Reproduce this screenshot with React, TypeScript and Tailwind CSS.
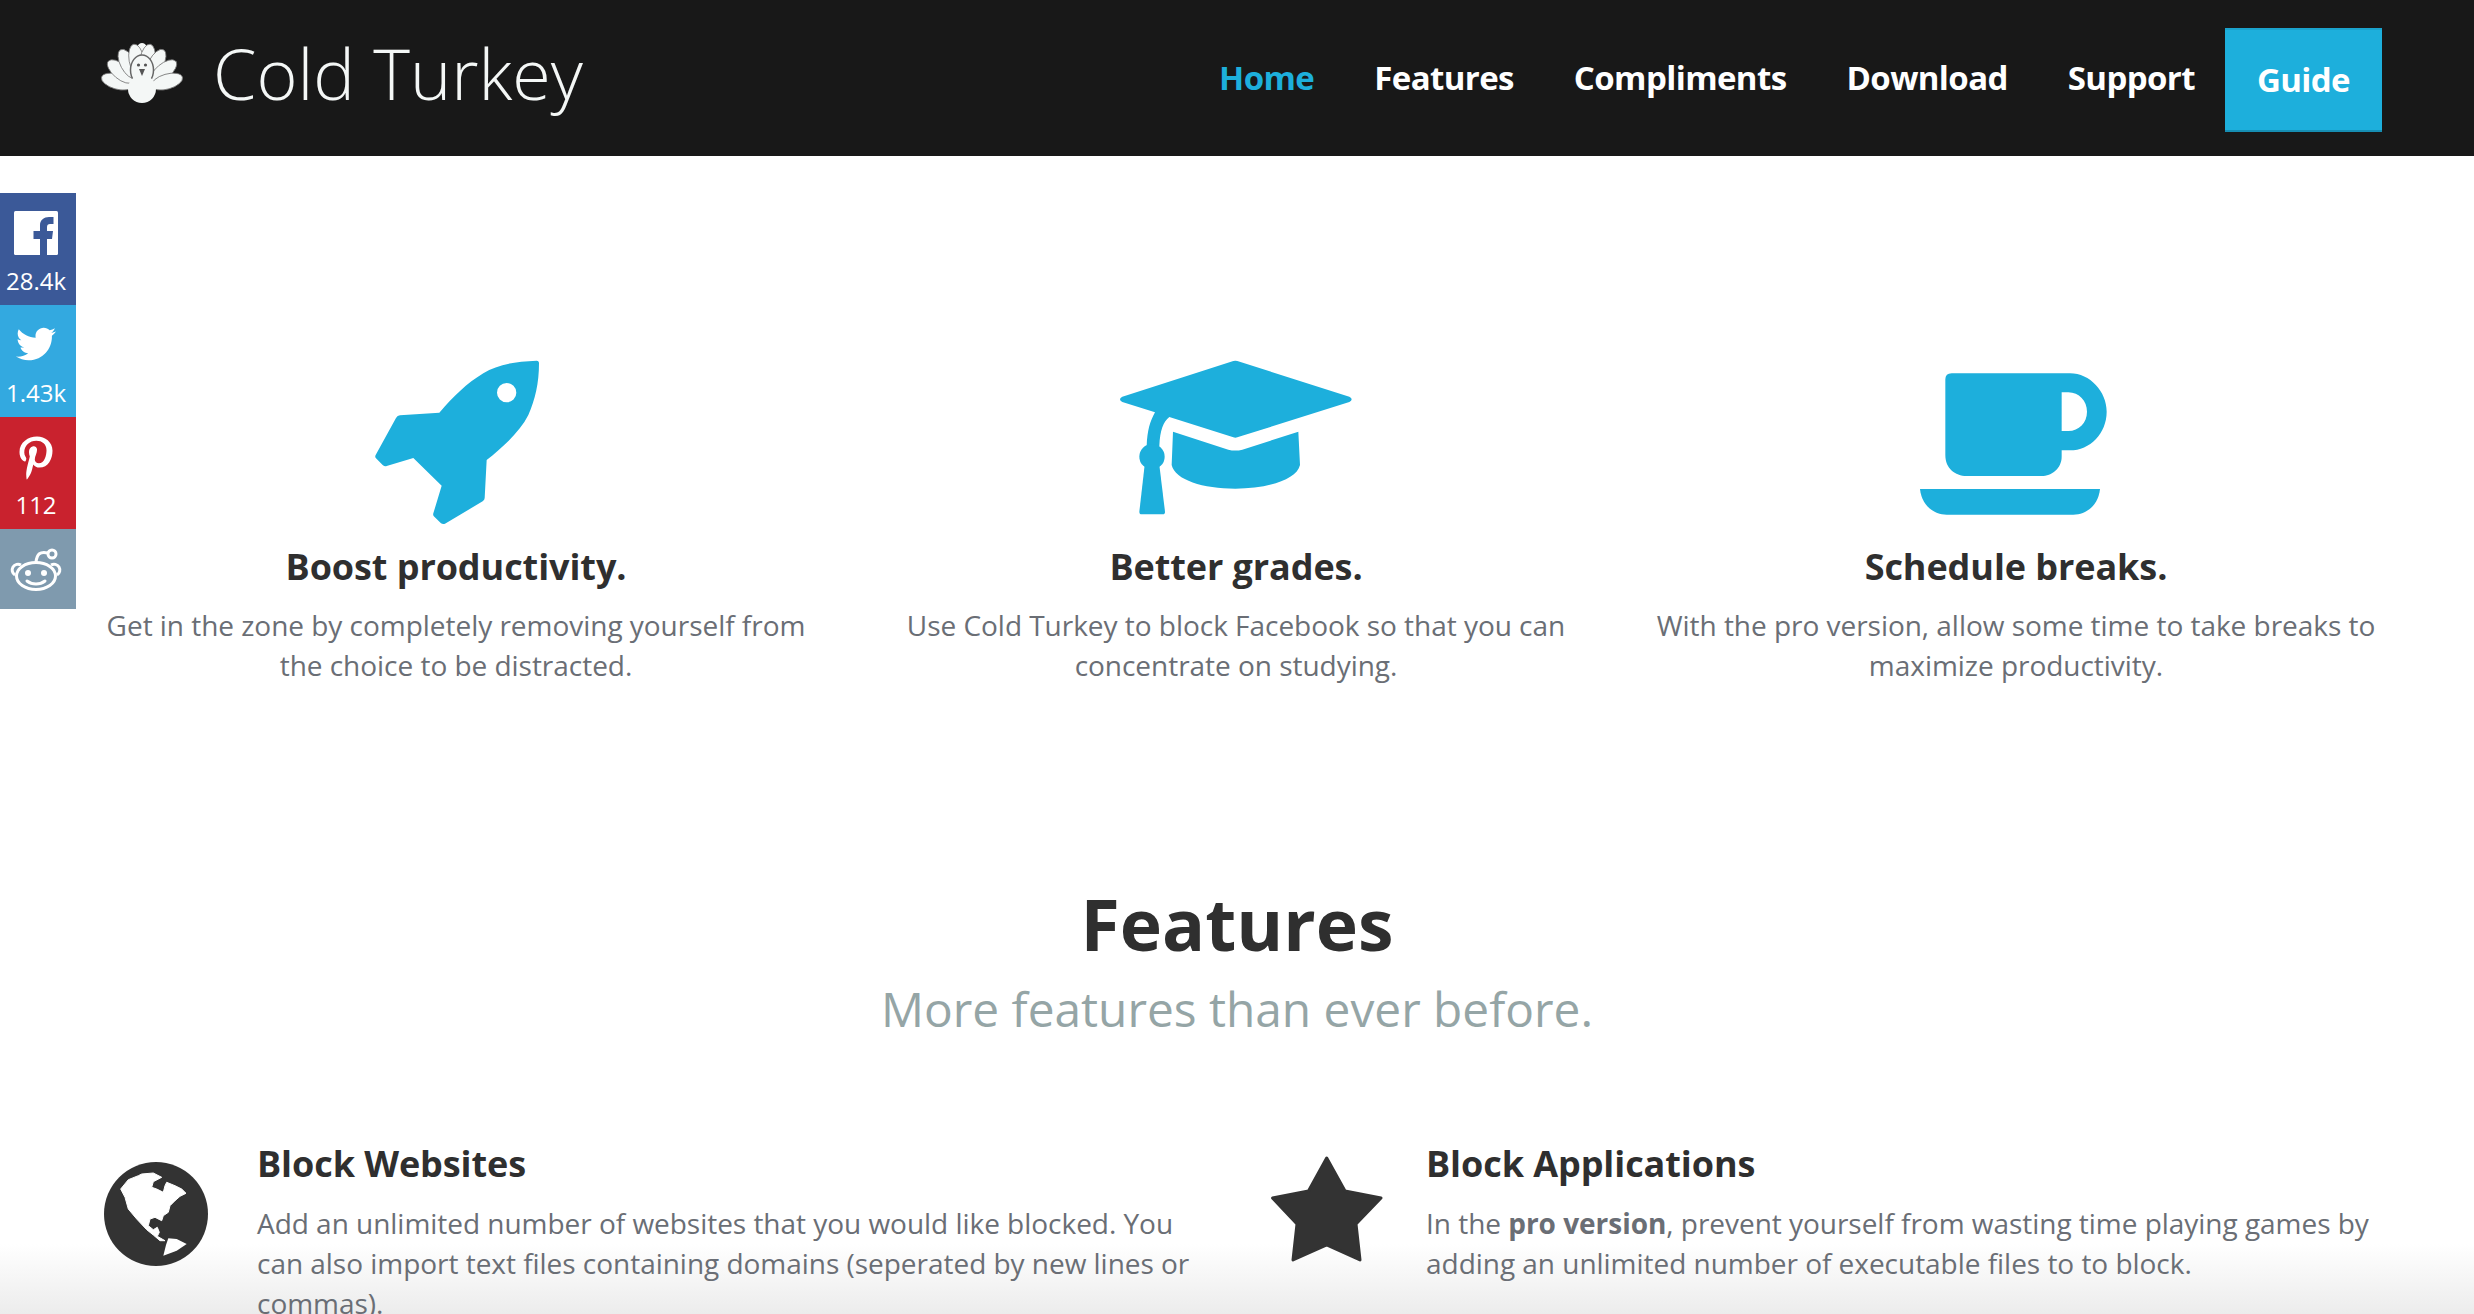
import { FaTwitter, FaPinterestP } from "react-icons/fa";

const font = { fontFamily: '"Open Sans", sans-serif' };

function TurkeyLogo() {
  const feathers = [-74, -50, -28, -10, 10, 28, 50, 74];
  return (
    <svg viewBox="0 0 84 60" className="w-[84px] h-[60px] shrink-0">
      <ellipse cx="42" cy="15" rx="7.5" ry="15" fill="#f4f7f6" />
      {feathers.map((a) => (
        <ellipse
          key={a}
          cx="42"
          cy="16"
          rx="7.5"
          ry="16"
          fill="#f4f7f6"
          stroke="#777"
          strokeWidth="0.8"
          transform={`rotate(${a} 42 ${48 - Math.abs(a) * 0.03}) translate(0 ${Math.abs(a) * 0.05})`}
        />
      ))}
      <ellipse cx="42" cy="27" rx="11.5" ry="15" fill="#f4f7f6" stroke="#666" strokeWidth="1.5" />
      <ellipse cx="42" cy="46" rx="14" ry="14" fill="#f4f7f6" />
      <circle cx="38.5" cy="22" r="1.6" fill="#555" />
      <circle cx="45.5" cy="22" r="1.6" fill="#555" />
      <path d="M39 26 L45 26 L42 33 Z" fill="#555" />
    </svg>
  );
}

function FacebookIcon() {
  return (
    <svg viewBox="0 0 44 44" className="w-[44px] h-[44px]">
      <rect width="44" height="44" rx="1.5" fill="#fff" />
      <path
        fill="#3b5998"
        d="M26 44 V28 H19.5 V20 H26 V14 C26 9 30 6 35 6 H39.5 V13 H36 C34 13 33 14 33 16 V20 H39 L38 28 H33 V44 Z"
      />
    </svg>
  );
}

function RedditIcon() {
  return (
    <svg viewBox="0 0 52 44" className="w-[52px] h-[44px]" fill="none" stroke="#fff" strokeWidth="3">
      <path d="M11 17 A5.5 5.5 0 1 0 5 27" />
      <path d="M41 17 A5.5 5.5 0 1 1 47 27" />
      <ellipse cx="26" cy="28" rx="19.5" ry="13.5" />
      <circle cx="42" cy="6" r="4" />
      <path d="M26 14 C27 6 30 3 38 5" />
      <circle cx="18" cy="25" r="3" fill="#fff" stroke="none" />
      <circle cx="34" cy="25" r="3" fill="#fff" stroke="none" />
      <path d="M17 33 C22 37 30 37 35 33" strokeLinecap="round" />
    </svg>
  );
}

function ShareBar() {
  return (
    <div style={font} className="absolute left-0 top-[193px] z-20 w-[76px] text-white text-[24px] leading-[24px] text-center">
      <div className="h-[112px] bg-[#3b5998] flex flex-col items-center pr-[4px] pt-[18px]">
        <FacebookIcon />
        <span className="mt-[14px]">28.4k</span>
      </div>
      <div className="h-[112px] bg-[#33a9e0] flex flex-col items-center pr-[4px] pt-[19px]">
        <FaTwitter className="w-[40px] h-[40px]" />
        <span className="mt-[17px]">1.43k</span>
      </div>
      <div className="h-[112px] bg-[#c9222e] flex flex-col items-center pr-[4px] pt-[19px]">
        <FaPinterestP className="w-[36px] h-[44px]" />
        <span className="mt-[13px]">112</span>
      </div>
      <div className="h-[80px] bg-[#7f9aae] flex items-center justify-center pr-[4px] pt-[2px]">
        <RedditIcon />
      </div>
    </div>
  );
}

function RocketIcon() {
  return (
    <svg viewBox="0 0 720 600" className="w-[240px] h-[200px] ml-[8px]">
      <path
        fill="#1dafdc"
        fillRule="evenodd"
        d="M590 62 C520 65 470 75 430 100 C380 130 340 170 298 218 L180 226 Q172 227 168 234 L107 345 Q104 351 108 355 L128 375 Q134 380 140 378 L220 354 L305 437 L280 520 Q278 526 283 530 L303 550 Q309 554 315 551 L428 484 Q434 480 434 474 L440 360 C490 320 540 275 565 225 C585 180 597 130 597 70 Q597 62 590 62 Z M529 158 A29 29 0 1 0 471 158 A29 29 0 1 0 529 158 Z"
      />
    </svg>
  );
}

function CapIcon() {
  return (
    <svg viewBox="0 0 840 600" className="w-[280px] h-[200px] ml-[8px]" fill="#1dafdc">
      <path d="M400 63 Q406 61 412 63 L748 170 Q755 173 755 178 Q755 183 748 186 L412 292 Q406 294 400 292 L208 231 C190 245 180 270 178 318 L140 318 C142 270 150 245 165 217 L67 186 Q60 183 60 178 Q60 173 67 170 Z" />
      <circle cx="156" cy="350" r="38" />
      <path d="M134 375 L118 515 Q118 523 125 523 L188 523 Q195 523 195 515 L178 375 Z" />
      <path d="M219 275 L385 329 Q406 334 427 329 L595 275 L600 375 C590 420 500 446 406 446 C310 446 225 420 215 375 Z" />
    </svg>
  );
}

function CupIcon() {
  return (
    <svg viewBox="0 0 720 600" className="w-[240px] h-[200px] ml-[8px]" fill="#1dafdc">
      <path
        fillRule="evenodd"
        d="M155 100 L510 100 C570 100 620 155 620 215 C620 280 570 331 510 331 L485 331 L485 350 C485 385 455 408 425 408 L200 408 C165 408 136 385 136 345 L136 118 Q136 100 155 100 Z M485 157 L505 157 C537 157 561 183 561 215 C561 248 537 273 505 273 L485 273 Z"
      />
      <path d="M60 447 L600 447 C595 495 560 524 520 524 L140 524 C100 524 65 495 60 447 Z" />
    </svg>
  );
}

function GlobeIcon() {
  return (
    <svg viewBox="0 0 104 104" className="w-[104px] h-[104px] shrink-0">
      <circle cx="52" cy="52" r="52" fill="#333" />
      <path
        fill="#fff"
        stroke="#fff"
        strokeWidth="1"
        strokeLinejoin="round"
        d="M16.7 27 L24.3 17.7 L34.3 13.7 L37.7 12 L49.3 11 L57.7 15.3 L49.3 19.7 L47.7 25.3 L52.7 27 L59.3 30.3 L61 23.7 L62.7 20.3 L71 23.7 L77.7 27 L82 31.3 L76 34.3 L71 38.7 L66 43.7 L64.3 50.3 L59.3 53.7 L57.7 58.7 L51 55.3 L46 57 L44.3 63.7 L49.3 67.7 L53.3 65.3 L55.3 70.3 L53.3 74.3 L61 78.7 L56 78.7 L49.3 73 L42.7 67.7 L32.7 57 L24.3 47 L21 35.3 Z"
      />
      <path fill="#fff" d="M64.3 76.3 L72.7 77 L82.7 82 L72.7 88.7 L59.3 93.7 L62 83 Z" />
    </svg>
  );
}

function StarIcon() {
  return (
    <svg viewBox="-2 -2 116 110" className="w-[116px] h-[110px] shrink-0">
      <path
        fill="#333"
        stroke="#333"
        strokeWidth="3"
        strokeLinejoin="round"
        d="M55.7 2 L74 35 L110 42 L85 68 L89 104 L55.7 89 L22 104 L26 68 L1.5 42 L37.5 35 Z"
      />
    </svg>
  );
}

const benefits = [
  {
    icon: <RocketIcon />,
    title: "Boost productivity.",
    lines: ["Get in the zone by completely removing yourself from", "the choice to be distracted."],
  },
  {
    icon: <CapIcon />,
    title: "Better grades.",
    lines: ["Use Cold Turkey to block Facebook so that you can", "concentrate on studying."],
  },
  {
    icon: <CupIcon />,
    title: "Schedule breaks.",
    lines: ["With the pro version, allow some time to take breaks to", "maximize productivity."],
  },
];

const links = ["Features", "Compliments", "Download", "Support"];

export default function App() {
  return (
    <div style={font} className="relative h-[1314px] overflow-hidden bg-white">
      {/* bottom fade sits behind the content */}
      <div className="absolute inset-x-0 bottom-0 h-[70px] bg-gradient-to-b from-transparent to-[#ececec]" />

      <div className="relative z-10">
        <header className="h-[156px] bg-[#181818] flex items-center justify-between pl-[100px] pr-[92px]">
          <a className="flex items-center gap-[29px] pb-[10px] text-[#f4f7f6]">
            <TurkeyLogo />
            <span className="text-[70px] font-[340] leading-none">Cold Turkey</span>
          </a>
          <nav className="flex items-center text-[33px] font-bold text-white tracking-[-0.6px]">
            <a className="px-[30px] text-[#1dafdc]">Home</a>
            {links.map((l) => (
              <a key={l} className="px-[30px]">
                {l}
              </a>
            ))}
            <a className="h-[104px] px-[32px] flex items-center bg-[#1dafdc] border-t-2 border-t-[#1aa2cc] border-b-2 border-b-[#168eb3] mt-[4px]">
              Guide
            </a>
          </nav>
        </header>

        <section className="grid grid-cols-3 pl-[66px] pr-[68px] pt-[184px]">
          {benefits.map((b) => (
            <div key={b.title} className="flex flex-col items-center text-center">
              {b.icon}
              <h3 className="mt-[2px] text-[36px] leading-[50px] font-bold text-[#2f2f2f] tracking-[-0.08px]">{b.title}</h3>
              <p className="mt-[13px] text-[28px] leading-[40px] text-[#6a6e75] tracking-[-0.03px]">
                {b.lines[0]}
                <br />
                {b.lines[1]}
              </p>
            </div>
          ))}
        </section>

        <section className="mt-[199px] text-center">
          <h2 className="text-[71.5px] leading-[80px] font-bold text-[#2f2f2f]">Features</h2>
          <p className="mt-[15px] text-[47.8px] leading-[60px] text-[#95a5a6]">More features than ever before.</p>
        </section>

        <section className="mt-[100px] flex pl-[104px]">
          <div className="flex gap-[49px] w-[1165px] shrink-0">
            <div className="pt-[23px]">
              <GlobeIcon />
            </div>
            <div className="w-[940px]">
              <h3 className="text-[36px] leading-[50px] font-bold text-[#2f2f2f] tracking-[-0.08px]">Block Websites</h3>
              <p className="mt-[14px] text-[28px] leading-[40px] text-[#6a6e75] tracking-[-0.03px]">
                Add an unlimited number of websites that you would like blocked. You can also import text files
                containing domains (seperated by new lines or commas).
              </p>
            </div>
          </div>
          <div className="flex gap-[41px]">
            <div className="pt-[15px]">
              <StarIcon />
            </div>
            <div className="w-[980px]">
              <h3 className="text-[36px] leading-[50px] font-bold text-[#2f2f2f] tracking-[-0.08px]">Block Applications</h3>
              <p className="mt-[14px] text-[28px] leading-[40px] text-[#6a6e75] tracking-[-0.03px]">
                In the <b>pro version</b>, prevent yourself from wasting time playing games by adding an unlimited
                number of executable files to to block.
              </p>
            </div>
          </div>
        </section>
      </div>

      <ShareBar />
    </div>
  );
}
